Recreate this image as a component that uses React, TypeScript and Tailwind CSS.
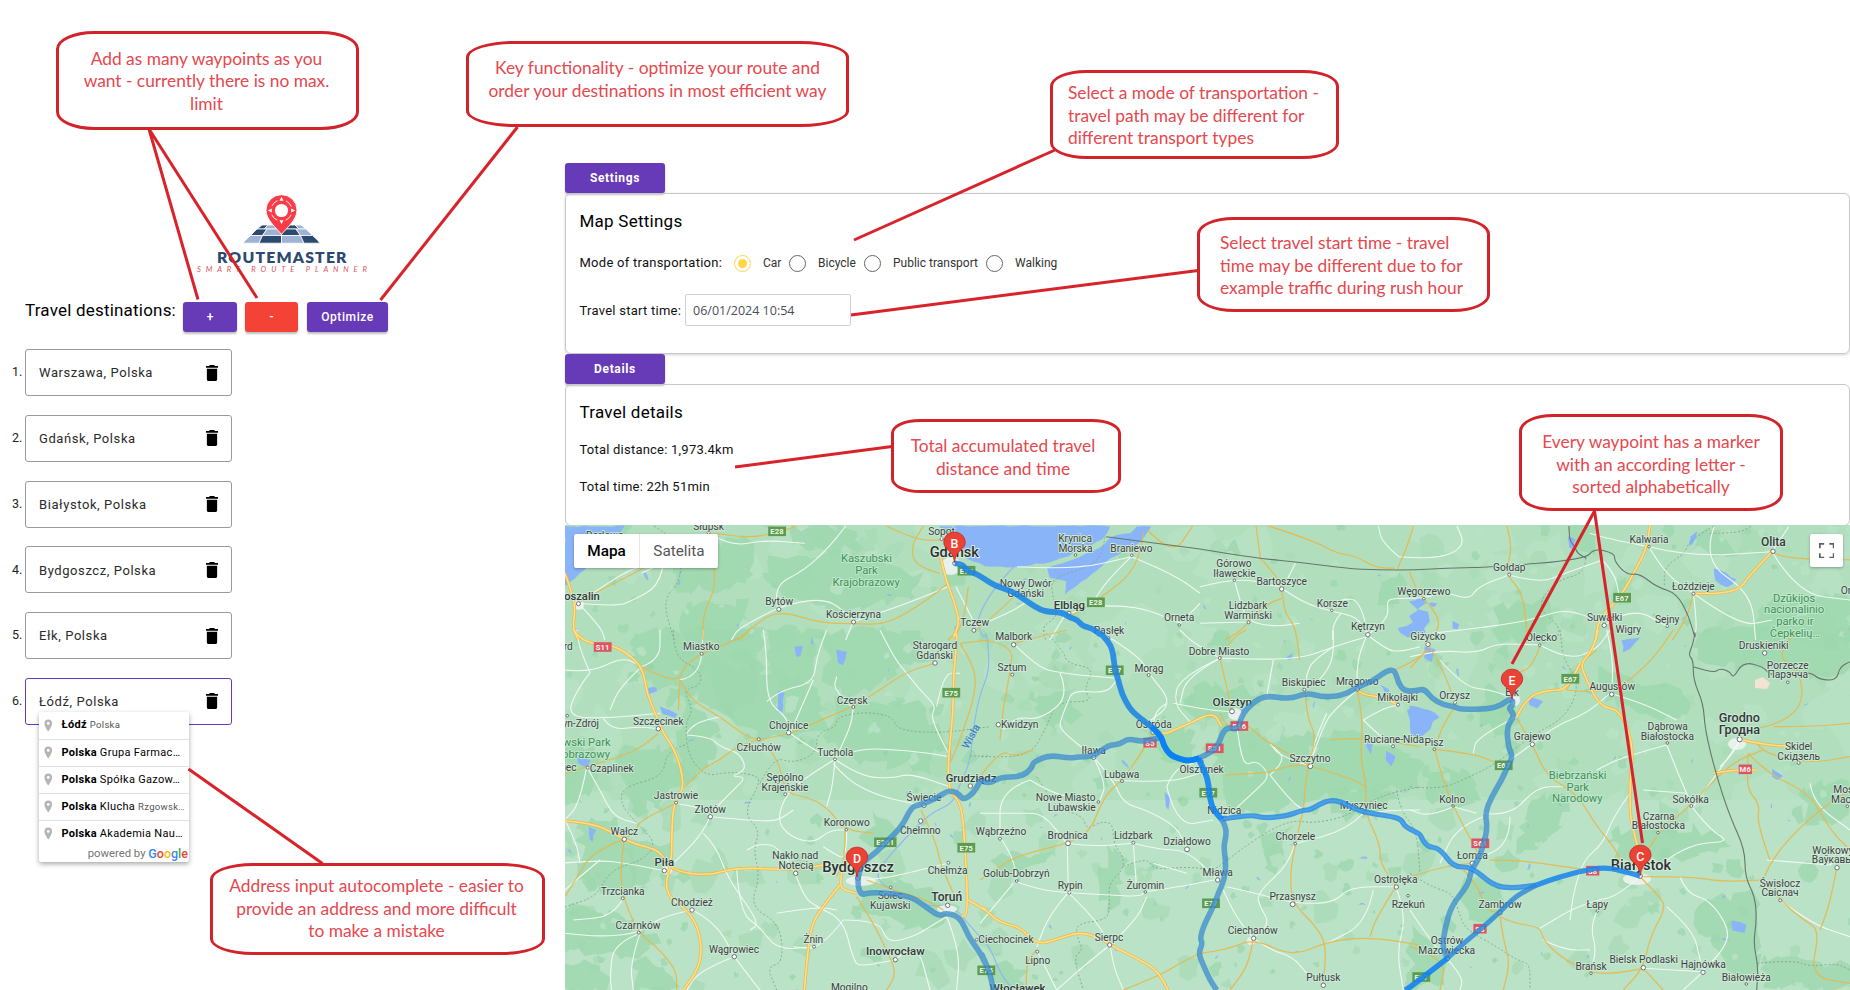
import type { ReactNode } from "react";

/* ------------------------------------------------------------------ */
/* Map geometry: every sheet has its own origin and scale              */
/* ------------------------------------------------------------------ */

type Sheet = "A" | "B" | "C" | "D" | "E";
type Pt = [number, number];

const SHEETS: Record<Sheet, { ox: number; oy: number; sx: number; sy: number }> = {
  A: { ox: 560, oy: 340, sx: 2.45, sy: 3 },
  B: { ox: 1200, oy: 340, sx: 2.412, sy: 3 },
  C: { ox: 560, oy: 630, sx: 3, sy: 3 },
  D: { ox: 980, oy: 630, sx: 3, sy: 3 },
  E: { ox: 1410, oy: 630, sx: 3, sy: 3 },
};

function project(s: Sheet, x: number, y: number): Pt {
  const t = SHEETS[s];
  return [t.ox + x / t.sx, t.oy + y / t.sy];
}

/* "A 1,2 3,4 | C 5,6" -> list of projected points */
function points(spec: string): Pt[] {
  return spec.split("|").flatMap((part) => {
    const [sheet, ...rest] = part.trim().split(/\s+/);
    return rest.map((p) => {
      const [x, y] = p.split(",").map(Number);
      return project(sheet as Sheet, x, y);
    });
  });
}

function n(v: number) {
  return v.toFixed(1);
}

function smooth(pts: Pt[]) {
  let d = `M${n(pts[0][0])} ${n(pts[0][1])}`;
  for (let i = 1; i < pts.length - 1; i++) {
    const mx = (pts[i][0] + pts[i + 1][0]) / 2;
    const my = (pts[i][1] + pts[i + 1][1]) / 2;
    d += `Q${n(pts[i][0])} ${n(pts[i][1])} ${n(mx)} ${n(my)}`;
  }
  const last = pts[pts.length - 1];
  return d + `L${n(last[0])} ${n(last[1])}`;
}

function closed(pts: Pt[]) {
  return "M" + pts.map((p) => `${n(p[0])} ${n(p[1])}`).join("L") + "Z";
}

function rng(seed: number) {
  let s = seed;
  return () => {
    s = (s * 1664525 + 1013904223) % 4294967296;
    return s / 4294967296;
  };
}

/* Roughens the edge of a polygon so that it reads as woodland */
function rough(pts: Pt[], amp: number, seed: number) {
  const r = rng(seed);
  const out: Pt[] = [];
  pts.forEach((p, i) => {
    const q = pts[(i + 1) % pts.length];
    const len = Math.hypot(q[0] - p[0], q[1] - p[1]);
    const k = Math.max(1, Math.round(len / 7));
    for (let j = 0; j < k; j++) {
      const t = j / k;
      out.push([
        p[0] + (q[0] - p[0]) * t + (r() - 0.5) * amp * 2,
        p[1] + (q[1] - p[1]) * t + (r() - 0.5) * amp * 2,
      ]);
    }
  });
  return out;
}

function scatter(count: number, min: number, max: number, seed: number, flat = 1) {
  const r = rng(seed);
  let d = "";
  for (let i = 0; i < count; i++) {
    const cx = 560 + r() * 1300;
    const cy = 520 + r() * 475;
    const size = min + r() * r() * (max - min);
    const k = 9;
    const tilt = r() * Math.PI;
    const pts: Pt[] = [];
    for (let j = 0; j < k; j++) {
      const a = (j / k) * Math.PI * 2;
      const m = size * (0.45 + r() * 0.75);
      const x = Math.cos(a) * m;
      const y = Math.sin(a) * m * flat;
      pts.push([cx + x * Math.cos(tilt) - y * Math.sin(tilt), cy + x * Math.sin(tilt) + y * Math.cos(tilt)]);
    }
    d += closed(pts);
  }
  return d;
}

const FORESTS = [
  "C 230,0 600,0 610,180 520,260 400,200 260,150 210,80",
  "C 440,100 620,120 760,160 800,300 690,330 560,300 470,230",
  "C 620,0 780,0 760,150 680,190 620,130",
  "C 800,0 1080,0 1110,90 1000,130 880,200 800,150",
  "C 830,210 1080,220 1150,330 1100,420 930,400 800,330",
  "C 380,200 480,270 450,400 380,460 340,330",
  "C 180,360 330,350 400,450 260,560 190,500",
  "C 60,590 160,560 250,700 200,790 60,760",
  "C 200,620 330,640 320,740 220,760",
  "C 880,740 1100,770 1200,850 1060,900 900,830",
  "C 0,830 180,860 300,930 220,980 0,960",
  "C 0,990 130,1000 150,1080 0,1080",
  "C 940,560 1040,600 960,660 910,640",
  "C 0,340 110,350 120,470 0,560",
  "C 220,990 330,1010 350,1080 240,1080",
  "D 720,280 900,320 1100,300 1320,380 1320,470 1150,480 980,520 760,560 700,430",
  "D 480,300 640,300 650,380 560,400",
  "D 640,160 860,190 720,280 620,250",
  "D 840,620 930,600 900,740 850,710",
  "D 380,640 440,700 400,860 360,800",
  "D 30,680 220,660 160,720 60,740",
  "D 1040,480 1240,500 1180,560 1080,560",
  "D 150,180 280,180 300,260 200,300",
  "D 40,990 130,1010 120,1080 40,1080",
  "E 160,750 230,740 290,840 200,880 150,820",
  "E 600,600 860,590 960,640 840,690 740,680 620,700",
  "E 860,810 1040,790 1040,1050 940,1000 870,900",
  "E 1060,980 1320,1000 1320,1080 1060,1080",
  "E 380,500 480,490 470,560 400,640 320,680 350,560",
  "E 560,120 830,180 830,270 700,260 600,220",
  "E 850,0 1320,0 1320,110 1200,150 1050,110 870,110",
  "E 1160,480 1320,440 1320,560 1210,590",
  "E 0,900 130,960 100,1060 0,1080",
  "E 230,160 330,240 260,330 200,260",
  "E 30,400 200,440 200,520 60,520",
  "A 300,600 460,600 480,700 400,760 280,740",
  "A 500,660 720,640 880,700 860,780 640,810 520,750",
  "A 300,780 460,790 480,900 300,900",
  "A 560,560 720,560 740,620 600,640",
  "B 1190,600 1240,560 1290,640 1240,670",
  "B 1340,790 1568,760 1568,900 1340,900",
  "B 890,560 960,560 950,650 910,640",
  "B 700,800 830,780 850,900 720,900",
  "B 420,720 480,700 500,760 440,790",
];

const WATER = [
  "A 12,558 160,558 120,625 60,690 12,740",
  "A 930,558 1348,558 1330,598 1260,640 1200,665 1130,680 1040,680 1000,655 955,600",
  "A 1450,558 1420,610 1350,655 1290,715 1235,765 1240,725 1200,712 1195,685 1262,658 1335,615 1350,588 1400,578 1412,558",
  "B 505,782 530,775 545,790 525,805 550,815 555,845 540,865 548,885 500,890 482,880 478,862 515,850 505,830 525,812",
  "B 556,785 572,788 566,800 555,798",
  "B 610,845 626,850 620,868 608,862",
  "B 1240,688 1270,700 1295,720 1270,742 1245,722",
  "B 888,590 905,600 900,630 890,620",
  "B 1185,590 1200,575 1190,610 1180,620",
  "E 0,228 60,240 90,260 70,275 60,300 20,330 0,312",
  "D 1282,240 1320,232 1320,292 1290,282",
  "E 45,50 75,60 65,97 45,85",
  "E 355,200 400,212 380,236 360,225",
  "E 965,870 1012,884 1005,910 970,900",
  "E 636,30 690,24 660,58 640,70",
  "E 1088,415 1120,440 1105,452 1086,440",
  "C 655,185 672,190 668,250 655,245",
  "C 50,380 90,390 80,412 55,400",
  "C 265,175 290,172 292,185 268,190",
  "C 300,230 350,250 345,262 310,250",
  "C 830,60 860,65 850,105 835,95",
  "C 705,50 730,48 722,78 708,80",
  "C 88,590 106,600 100,635 90,630",
  "D 555,485 570,500 565,540 556,530",
  "D 1170,320 1182,330 1170,375 1160,350",
  "D 780,215 800,205 790,240 782,250",
  "D 1220,360 1245,380 1235,410 1215,390",
  "D 1200,160 1225,175 1235,200 1215,190",
  "D 920,85 940,68 938,85 925,92",
];

const WHITE_ROADS = [
  "C 15,120 90,128 190,80 245,110",
  "C 90,128 50,180 20,260 140,265 300,250",
  "C 90,128 60,60 50,0",
  "C 245,110 300,90 300,0",
  "C 130,265 150,300 240,290 295,296",
  "C 245,110 180,170 150,240",
  "C 360,150 420,140 430,0",
  "C 380,310 400,280 480,260",
  "C 380,315 450,320 480,350 540,370 560,420 510,440 560,440 520,480 470,530 450,560",
  "C 610,0 620,60 620,215 680,260 690,310",
  "C 620,215 660,180 760,160 770,80 800,0",
  "C 690,310 760,150",
  "C 690,310 760,360 825,388 900,355 1040,360 1170,380",
  "C 825,388 870,300 880,235",
  "C 825,388 740,440 680,490 650,570 690,620 760,640 810,600 860,600",
  "C 825,388 820,460 800,530",
  "C 825,388 900,440 1000,445 1050,430 1170,470",
  "C 820,400 860,450 960,500 1080,525",
  "C 880,235 820,180 830,140",
  "C 1040,130 1080,180 1130,230 1110,260 1170,380",
  "C 1130,230 1150,130 1200,130",
  "C 960,0 1000,80 1040,130",
  "C 450,560 430,610 340,700",
  "C 450,560 560,570 650,575 700,540",
  "C 430,610 470,650 500,740 600,880 570,900",
  "C 0,700 120,690 200,700 313,722",
  "C 120,690 60,740 15,780",
  "C 190,805 160,860 40,870",
  "C 395,840 300,860 240,910 120,920 15,910",
  "C 395,840 420,850 480,900 523,980",
  "C 523,980 420,1020 380,1080",
  "C 523,980 560,1030 600,1080",
  "C 240,910 160,940 150,1040 155,1080",
  "C 240,910 210,1000 220,1080",
  "C 530,720 540,850 600,890 650,960 760,950",
  "C 650,850 770,830 830,840",
  "C 706,730 730,800 770,830 850,870 880,990 900,1010 1005,990",
  "C 850,870 780,960 700,950",
  "C 850,870 960,870 980,940 1060,920 1110,890 1160,860",
  "C 1005,990 1070,930 1110,1080",
  "C 1160,860 1200,960 1190,1080",
  "C 340,520 420,530 450,560",
  "C 80,410 60,520 15,570",
  "C 80,410 120,480 160,560 230,580",
  "C 15,570 50,640 60,700",
  "C 706,730 660,650 600,640 560,660",
  "C 860,600 860,690 820,670 790,650",
  "C 1092,530 1100,500 1170,490",
  "C 1165,700 1080,720 1000,740 920,750",
  "D 100,40 170,110 240,130 410,145",
  "D 240,130 270,200 180,270 110,260 70,300",
  "D 270,200 280,180 380,190 410,150",
  "D 270,200 240,270 240,300 340,380",
  "D 385,20 480,80 505,130 580,220 500,280",
  "D 720,85 600,140 580,220 630,275",
  "D 580,220 680,240 755,245",
  "D 720,85 880,90 980,80 1060,50 1160,20",
  "D 1060,50 1000,90 980,130 975,180",
  "D 1060,50 1060,100 1000,170",
  "D 1060,50 1060,0",
  "D 720,85 620,140 600,220",
  "D 720,85 640,40 600,0",
  "D 520,300 520,250 560,220",
  "D 340,380 400,450 430,520 500,540 590,590 620,655",
  "D 340,380 380,460 360,510",
  "D 150,450 200,480 260,500 360,515",
  "D 150,450 60,480 60,620",
  "D 0,550 120,550 190,550 260,640",
  "D 262,640 265,780",
  "D 262,640 330,650 460,640",
  "D 460,640 470,780",
  "D 460,640 540,660 620,660 713,750",
  "D 520,700 620,730",
  "D 108,755 180,780 265,788 380,795 480,800 495,785",
  "D 495,785 600,770 713,748",
  "D 265,788 210,850 170,950",
  "D 265,788 340,860 390,945",
  "D 390,945 470,870 500,800",
  "D 390,945 400,1010 430,1080",
  "D 390,945 320,1000 230,1080",
  "D 60,620 100,680 110,755",
  "D 740,770 830,790 938,820 1060,820 1110,770 1248,770",
  "D 730,780 760,850 820,925",
  "D 945,640 930,700 830,790 840,830 870,880 820,925",
  "D 740,560 840,470 870,435 830,390 790,410 770,290",
  "D 870,435 930,510 970,540",
  "D 870,435 920,390 880,350",
  "D 560,470 580,420 640,400",
  "D 560,470 590,590 700,570",
  "D 400,450 560,460 660,430",
  "D 1040,250 1000,340 990,405",
  "D 1132,180 1060,240 1030,290 990,400",
  "D 1150,270 1180,300 1240,350",
  "D 1150,270 1200,240 1254,224",
  "D 1162,14 1140,60 1130,130 1132,180",
  "D 1162,14 1220,60 1260,65 1320,50",
  "D 990,408 900,380 870,340",
  "D 1150,550 1100,600 950,640",
  "D 1150,550 1240,540 1320,540",
  "D 1248,770 1280,860 1250,960 1270,1080",
  "D 1180,780 1160,880 1040,940",
  "D 820,925 870,960 938,980 980,1030",
  "D 170,960 200,1020 230,1080",
  "D 0,880 50,820 100,760",
  "D 880,90 860,200",
  "E 0,80 90,60 200,70 260,40 390,45",
  "E 90,90 160,170 240,180 300,200",
  "E 320,260 200,320 190,370",
  "E 300,390 370,340",
  "E 370,340 430,290 530,250 600,190",
  "E 600,190 700,220 800,270",
  "E 390,45 470,90 560,60 600,0",
  "E 590,0 610,80 605,190",
  "E 770,345 640,380 560,420",
  "E 770,345 800,420 830,490 845,525",
  "E 700,480 830,490",
  "E 660,490 610,560 580,640 520,690 490,790 480,870",
  "E 845,530 900,600 960,635 860,640 780,680 740,720",
  "E 220,550 300,560 380,470 460,470",
  "E 300,560 300,640 200,690",
  "E 130,530 60,560 0,540",
  "E 130,530 200,550",
  "E 220,560 140,590 90,700",
  "E 690,740 620,800 560,810 480,840 390,895",
  "E 560,845 540,890 560,960 540,1030",
  "E 400,930 460,960 540,960",
  "E 810,740 830,790 900,810 960,900 940,960 880,1020",
  "E 770,830 850,900 870,990 880,1020",
  "E 700,1015 880,1025",
  "E 990,330 950,390 850,530",
  "E 990,330 970,370 930,410",
  "E 1070,690 1260,705",
  "E 1260,705 1320,660",
  "E 1110,810 1200,880 1320,920",
  "E 0,840 60,930 110,985",
  "E 110,985 160,1040 150,1080",
  "E 880,1025 820,1080",
  "E 1200,460 1210,520 1320,600",
  "A 45,790 150,700 200,680 230,640",
  "A 45,790 140,800 180,780 240,740 260,640",
  "A 362,580 300,640 200,700",
  "A 362,580 420,620 500,600 600,610",
  "A 534,805 520,740 600,690 660,620 700,558",
  "A 534,805 640,760 720,840",
  "A 718,845 830,800 950,740",
  "A 718,845 700,900",
  "A 534,805 440,860 420,900",
  "A 45,790 100,860 110,900",
  "A 970,740 1020,860",
  "A 1020,860 1100,820 1150,780",
  "A 1240,820 1200,900",
  "A 1400,650 1340,720 1300,800 1250,820",
  "A 1400,650 1500,700 1568,760",
  "A 1300,800 1400,790 1520,850",
  "A 1520,850 1568,790",
  "A 1120,680 1260,690 1400,650",
  "B 0,740 60,722 130,720 197,745 210,720 230,670",
  "B 197,745 250,790 320,815 380,830 405,885",
  "B 83,720 100,800 118,845 180,860 240,850",
  "B 340,820 320,850 320,900",
  "B 405,885 440,850 455,820 450,780 475,775 540,775 590,755 650,780 670,740 745,705",
  "B 405,885 390,780 340,775 318,811",
  "B 745,705 820,730 880,700 970,660",
  "B 970,660 1000,700 1010,760",
  "B 480,650 570,660 640,620 620,558",
  "B 480,650 440,610 430,558",
  "B 0,850 118,846",
  "B 975,855 1040,800 1130,860",
  "B 975,855 900,800 800,840 700,860 560,880",
  "B 1083,620 1180,650 1380,635",
  "B 1083,620 1000,600 940,580",
  "B 1083,620 1120,700 1190,760",
  "B 1190,760 1200,860 1190,900",
  "B 1240,560 1210,660 1330,760 1340,900",
  "B 1380,635 1420,560",
  "B 1380,635 1440,760 1568,780",
  "B 1190,760 1300,860 1380,840",
];

const YELLOW_ROADS = [
  "C 245,110 300,140 360,150 370,110 425,70 530,30 570,0",
  "C 360,150 390,210 480,260 560,320 596,328",
  "C 596,328 690,315 780,270 880,230 960,180 1040,125 1124,100",
  "C 360,150 355,240",
  "C 295,310 250,350 180,380 80,410 15,430",
  "C 375,470 420,420 480,390 530,350 596,328",
  "C 596,328 650,370 676,490 740,500 800,530 855,600 940,610",
  "C 348,520 240,570 230,600 193,628",
  "C 193,628 100,660 40,760 15,800",
  "C 193,628 180,720 190,805 235,908 290,950 350,1020 350,1080",
  "C 855,600 855,690 830,740",
  "C 890,800 940,880 980,960 1010,1030 980,1080",
  "C 1083,540 1130,640 1140,700 1180,790",
  "C 920,750 1000,780 1100,810 1150,840",
  "C 1200,40 1240,100 1250,180 1200,330 1170,400",
  "C 1200,40 1290,30",
  "D 0,30 100,40 90,130 70,230 60,330",
  "D 100,40 260,0",
  "D 720,85 740,170 755,240",
  "D 720,85 760,20 800,0",
  "D 470,390 500,340 520,310",
  "D 340,580 370,500 425,453 490,360",
  "D 0,750 80,690 180,660 262,640 320,610 345,570",
  "D 720,250 740,300 800,280 850,330 990,408",
  "D 735,435 800,430 860,430 930,405 990,408",
  "D 975,180 980,260 1010,320 980,420 970,540",
  "D 970,540 945,640 930,740 938,820 1000,880 1040,940 1030,1060",
  "D 990,408 1100,440 1160,470",
  "D 1132,180 1150,270 1140,380 1160,470 1155,550 1200,640 1200,700 1248,770",
  "D 1050,330 1140,320 1320,350",
  "D 660,970 740,960 820,925 938,980 1040,935 1170,920 1320,945",
  "D 820,925 810,1000 750,1080",
  "D 660,970 600,1000 540,1035 430,1080",
  "D 1248,770 1190,860 1170,920",
  "D 1245,120 1300,95 1345,60",
  "D 140,1080 135,1000 170,960",
  "D 0,440 60,360 100,380 160,360",
  "E 0,115 50,60",
  "E 390,45 370,110 320,130",
  "E 320,265 367,342 410,440 500,490 560,590 620,660 640,720",
  "E 135,230 100,280 74,358",
  "E 54,43 100,120 135,218",
  "E 74,358 90,420 128,528 210,680",
  "E 74,358 190,370 260,400 290,400",
  "E 240,690 330,690 460,710 540,720",
  "E 0,740 100,710 180,700",
  "E 160,720 200,760 230,840 270,850",
  "E 270,860 310,880 390,890 400,930 450,980 540,1030 620,1030 700,1015",
  "E 270,860 280,930 300,1000 280,1080",
  "E 690,740 740,790 770,830 720,920 700,1015 640,1080",
  "E 700,1015 760,1080",
  "E 700,740 850,740 930,755 1060,750",
  "E 744,610 845,525 960,400 1060,360",
  "E 740,620 700,680",
  "E 1060,750 1080,690 1200,560 1320,480",
  "E 1080,690 1040,580 1050,520 1010,480 1015,370",
  "E 1015,370 1070,430 1200,490 1260,600 1320,660",
  "E 1060,750 1110,810 1180,870 1230,900 1200,1040 1320,1060",
  "E 1280,715 1260,820 1230,900",
  "E 470,180 510,100 560,60",
  "E 470,180 600,195 720,100 790,0",
  "E 1010,300 1090,290 1180,230 1170,120 1100,80 1160,0",
  "E 1090,290 1200,290 1320,280",
  "E 1040,340 1060,370 1200,400 1320,380",
  "E 0,950 110,985 90,1080",
  "A 45,790 80,760 200,690 290,620 362,575 460,595 540,575 580,558",
  "A 362,580 390,720 350,820 350,900",
  "A 440,900 470,860 534,810 640,850 718,850 800,855 900,780 950,730",
  "A 930,700 870,680 860,620 890,558",
  "A 800,558 870,600 930,600",
  "A 1430,575 1420,680 1330,770 1250,830",
  "A 1440,570 1500,650 1550,558",
  "A 1000,740 990,860 950,900",
  "A 1020,870 1100,790 1130,740",
  "B 135,558 140,600 145,655",
  "B 145,655 180,700 197,745 205,820 225,850 235,900 240,960",
  "B 165,558 270,600 330,640 380,650 420,682 470,685",
  "B 515,558 500,620 475,690",
  "B 505,695 525,760 540,775 575,830 575,870 550,900",
  "B 197,775 160,790 118,845 100,870 60,900",
  "B 740,558 755,620 735,700 780,760 790,900",
  "B 1380,635 1400,655 1568,660",
  "B 1190,760 1180,820 1140,900",
];

const HIGHWAYS = [
  "C 40,0 70,40 160,45 215,80 250,120 260,190 290,260 310,310 350,370 375,470 340,520 335,620 335,690 310,790 395,850 425,930 420,1010 370,1080",
  "C 15,572 100,580 160,610 193,628",
  "C 193,628 230,645 300,660 330,720 440,738 530,712 700,720 820,700",
  "C 840,765 770,850 750,910 740,1000 733,1080",
  "C 890,790 850,780 840,765 850,690 930,680",
  "A 930,640 945,720 965,780 980,850 960,900 | C 1195,0 1180,130 1180,250 1165,380 1165,480 1205,520 1215,650 1225,850 1205,860",
  "C 1225,810 1290,850 | D 0,825 60,880 120,890 170,945 240,925 300,905 360,925 420,960 480,990 530,1020 565,1080",
  "A 12,700 40,790 30,860 45,900",
  "D 560,310 630,280 700,245 725,290",
  "D 520,310 560,310",
  "D 1132,180 1150,195 1200,200 1254,224",
  "B 1085,558 1080,620 1050,690 1020,760 960,840 955,900",
  "E 565,0 550,60 510,100 530,150 570,230 630,240 670,340 660,460 660,560 680,640 695,690",
  "E 320,260 350,200 420,180 470,180 510,100",
  "E 1000,330 1060,345 1170,350",
  "E 910,430 970,420 1040,420",
  "B 1195,760 1290,765 1330,700 1380,635",
];

const COUNTY_LINES = [
  "C 340,0 340,80 420,120 425,165 370,180 400,240 375,280 385,380 440,440 500,425 590,435 600,460 550,550 600,600 580,660 600,740 570,830 660,880 670,1000 620,1010 650,1080",
  "C 375,345 320,360 310,440 190,470 180,520 230,580 290,640 250,690 150,720 110,800 15,830",
  "C 600,460 640,380 700,400 770,370 770,310 830,290 830,260 920,245 1000,260 1010,300 1140,310 1290,290",
  "C 1230,378 1290,378",
  "A 230,558 290,600 300,720 250,780 280,900",
  "A 1335,590 1330,640 1300,680 1200,715 1210,780 1220,830 1180,860 1190,900",
  "D 190,0 250,60 260,100 345,115 310,180 340,215 230,215 200,290 150,380 0,380",
  "D 170,440 220,520 250,540 310,560 320,600 360,575 400,580 400,640 430,680 430,720 385,760 390,830 380,870 290,880 290,920 310,960 280,980 310,1080",
  "D 430,710 500,680 520,720 620,710 700,720 730,700 780,660 870,600 940,570 1000,580 1100,560 1190,500 1320,470",
  "D 1250,480 1260,540 1310,600 1320,730",
  "E 0,470 90,480 180,440 260,400 360,320 470,260 510,160 460,90 450,0",
  "E 0,730 60,770 130,790 150,860 170,900 260,950 320,990 360,1000 360,1080",
  "E 1040,1000 1150,990 1200,1010 1280,1000 1320,1020",
  "B 930,655 930,700 860,720 810,800 870,860 860,900",
  "B 1240,558 1180,600 1170,640 1120,680 1120,740",
  "B 1230,580 1300,580 1330,558",
];

const BORDERS = [
  "A 1338,590 1568,627 | B 0,627 140,655 250,668 350,685 430,690 520,690 620,683 700,682 930,658 950,625 1000,640 1000,665 1030,705 1060,700 1100,740 1150,760 1180,830 1195,900 | E 855,0 850,40 835,75 850,90 850,150 880,220 885,300 920,440 960,560 1005,660 1005,740 1035,800 1040,870 1030,940 1045,1010 1040,1080",
  "B 890,558 890,600 905,620 910,640 932,655",
  "E 850,110 910,130 930,115 960,125 970,145 1000,95 1060,110 1080,135 1110,130 1200,125 1230,150 1280,150 1290,110 1320,95",
];

/* ------------------------------------------------------------------ */
/* Map labels                                                          */
/* ------------------------------------------------------------------ */

type Label = [Sheet, number, number, string, number?];

const TOWNS: Label[] = [
  ["A", 364, 559, "Słupsk"],
  ["A", 110, 585, "Darłowo"],
  ["A", 935, 575, "Sopot"],
  ["A", 1262, 595, "Krynica"],
  ["A", 1263, 625, "Morska"],
  ["A", 1400, 625, "Braniewo"],
  ["A", 537, 785, "Bytów"],
  ["A", 719, 823, "Kościerzyna"],
  ["A", 1016, 848, "Tczew"],
  ["A", 1141, 730, "Nowy Dwór"],
  ["A", 1141, 760, "Gdański"],
  ["A", 1517, 833, "Orneta"],
  ["A", 1345, 872, "Pasłęk"],
  ["B", 82, 670, "Górowo"],
  ["B", 83, 700, "Iławeckie"],
  ["B", 197, 723, "Bartoszyce"],
  ["B", 116, 795, "Lidzbark"],
  ["B", 116, 825, "Warmiński"],
  ["B", 319, 790, "Korsze"],
  ["B", 405, 860, "Kętrzyn"],
  ["B", 540, 755, "Węgorzewo"],
  ["B", 550, 890, "Giżycko"],
  ["B", 746, 683, "Gołdap"],
  ["B", 1083, 597, "Kalwaria"],
  ["B", 1190, 740, "Łoździeje"],
  ["B", 976, 832, "Suwałki"],
  ["B", 1033, 868, "Wigry"],
  ["B", 1127, 838, "Sejny"],
  ["B", 824, 893, "Olecko"],
  ["B", 1577, 752, "Orany"],
  ["C", 424, 50, "Miastko"],
  ["C", 1125, 45, "Starogard"],
  ["C", 1124, 75, "Gdański"],
  ["C", 877, 210, "Czersk"],
  ["C", 295, 273, "Szczecinek"],
  ["C", 686, 285, "Chojnice"],
  ["C", 596, 352, "Człuchów"],
  ["C", 826, 367, "Tuchola"],
  ["C", 155, 414, "Czaplinek"],
  ["C", 675, 442, "Sępólno"],
  ["C", 675, 471, "Krajeńskie"],
  ["C", 348, 497, "Jastrowie"],
  ["C", 451, 537, "Złotów"],
  ["C", 193, 604, "Wałcz"],
  ["C", 1092, 502, "Świecie"],
  ["C", 860, 577, "Koronowo"],
  ["C", 1081, 600, "Chełmno"],
  ["C", 706, 677, "Nakło nad"],
  ["C", 708, 706, "Notecią"],
  ["C", 1163, 721, "Chełmża"],
  ["C", 188, 784, "Trzcianka"],
  ["C", 396, 816, "Chodzież"],
  ["C", 991, 797, "Solec"],
  ["C", 991, 826, "Kujawski"],
  ["C", 234, 887, "Czarnków"],
  ["C", 522, 957, "Wągrowiec"],
  ["C", 760, 929, "Żnin"],
  ["C", 868, 1072, "Mogilno"],
  ["C", 62, 280, "yn-Zdrój"],
  ["C", 30, 411, "iec"],
  ["C", 25, 48, "rd"],
  ["D", 101, 20, "Malbork"],
  ["D", 96, 113, "Sztum"],
  ["D", 507, 115, "Morąg"],
  ["D", 717, 63, "Dobre Miasto"],
  ["D", 119, 284, "Kwidzyn"],
  ["D", 521, 283, "Ostróda"],
  ["D", 341, 360, "Iława"],
  ["D", 425, 433, "Lubawa"],
  ["D", 257, 502, "Nowe Miasto"],
  ["D", 275, 532, "Lubawskie"],
  ["D", 665, 417, "Olsztynek"],
  ["D", 733, 542, "Nidzica"],
  ["D", 63, 605, "Wąbrzeźno"],
  ["D", 263, 617, "Brodnica"],
  ["D", 460, 617, "Lidzbark"],
  ["D", 621, 634, "Działdowo"],
  ["D", 109, 731, "Golub-Dobrzyń"],
  ["D", 271, 767, "Rypin"],
  ["D", 496, 765, "Żuromin"],
  ["D", 713, 727, "Mława"],
  ["D", 78, 929, "Ciechocinek"],
  ["D", 173, 990, "Lipno"],
  ["D", 387, 921, "Sierpc"],
  ["D", 818, 901, "Ciechanów"],
  ["D", 938, 799, "Przasnysz"],
  ["D", 946, 620, "Chorzele"],
  ["D", 990, 385, "Szczytno"],
  ["D", 1151, 527, "Myszyniec"],
  ["D", 971, 158, "Biskupiec"],
  ["D", 1132, 153, "Mrągowo"],
  ["D", 1253, 203, "Mikołajki"],
  ["D", 1242, 327, "Ruciane-Nida"],
  ["D", 1247, 747, "Ostrołęka"],
  ["D", 1285, 822, "Rzekuń"],
  ["D", 1030, 1041, "Pułtusk"],
  ["E", 134, 197, "Orzysz"],
  ["E", 306, 188, "Ełk"],
  ["E", 367, 320, "Grajewo"],
  ["E", 72, 337, "Pisz"],
  ["E", 607, 170, "Augustów"],
  ["E", 127, 507, "Kolno"],
  ["E", 187, 677, "Łomża"],
  ["E", 270, 824, "Zambrów"],
  ["E", 111, 932, "Ostrów"],
  ["E", 110, 962, "Mazowiecka"],
  ["E", 773, 288, "Dąbrowa"],
  ["E", 772, 318, "Białostocka"],
  ["E", 842, 507, "Sokółka"],
  ["E", 746, 558, "Czarna"],
  ["E", 745, 587, "Białostocka"],
  ["E", 562, 822, "Łapy"],
  ["E", 543, 1008, "Brańsk"],
  ["E", 701, 989, "Bielsk Podlaski"],
  ["E", 880, 1003, "Hajnówka"],
  ["E", 1009, 1041, "Białowieża"],
  ["E", 1110, 760, "Świsłocz"],
  ["E", 1110, 788, "Свіслач"],
  ["E", 1284, 660, "Wołkowysk"],
  ["E", 1284, 689, "Ваўкавыск"],
  ["E", 1166, 348, "Skidel"],
  ["E", 1166, 378, "Скідзель"],
  ["E", 1312, 477, "Mosty"],
  ["E", 1312, 507, "Масты"],
  ["E", 1133, 105, "Porzecze"],
  ["E", 1133, 134, "Парэчча"],
  ["E", 1061, 45, "Druskieniki"],
];

const CITIES: Label[] = [
  ["A", 54, 768, "oszalin", 11.2],
  ["A", 1248, 796, "Elbląg", 11.4],
  ["B", 1383, 607, "Olita", 12],
  ["C", 313, 697, "Piła", 11.4],
  ["C", 1233, 445, "Grudziądz", 11.2],
  ["C", 1160, 801, "Toruń", 12],
  ["C", 1006, 963, "Inowrocław", 11.4],
  ["D", 113, 1075, "Włocławek", 11.4],
  ["D", 757, 217, "Olsztyn", 11.8],
  ["E", 988, 263, "Grodno", 12.6],
  ["E", 988, 300, "Гродна", 12.6],
];

const CAPITALS: Label[] = [
  ["A", 966, 635, "Gdańsk", 14.6],
  ["C", 894, 712, "Bydgoszcz", 14.8],
  ["E", 693, 704, "Białystok", 14.6],
];

const PARKS: Label[] = [
  ["A", 751, 655, "Kaszubski"],
  ["A", 751, 690, "Park"],
  ["A", 750, 725, "Krajobrazowy"],
  ["B", 1433, 773, "Dzūkijos"],
  ["B", 1433, 808, "nacionalinio"],
  ["B", 1435, 844, "parko ir"],
  ["B", 1435, 879, "Čepkelių…"],
  ["C", 80, 335, "wski Park"],
  ["C", 78, 371, "obrazowy"],
  ["E", 503, 435, "Biebrzański"],
  ["E", 503, 470, "Park"],
  ["E", 502, 505, "Narodowy"],
];

/* sheet, x, y, radius */
const DOTS: [Sheet, number, number, number][] = [
  ["A", 364, 578, 1.6], ["A", 45, 791, 2], ["A", 536, 808, 2], ["A", 719, 846, 2], ["A", 1014, 871, 2],
  ["A", 935, 597, 1.6], ["A", 1263, 645, 1.3], ["A", 1401, 646, 1.3], ["A", 1247, 820, 2], ["A", 1517, 855, 1.3],
  ["A", 967, 670, 2], ["B", 83, 721, 1.3], ["B", 197, 747, 2.2], ["B", 117, 847, 1.5], ["B", 318, 811, 1.3],
  ["B", 405, 884, 2.2], ["B", 540, 776, 1.3], ["B", 746, 704, 1.5], ["B", 1083, 620, 1.3], ["B", 1382, 634, 2.2],
  ["B", 1190, 761, 1.5], ["B", 975, 856, 2.2], ["B", 1127, 859, 1.3],
  ["C", 425, 71, 1.5], ["C", 1125, 99, 2.2], ["C", 880, 231, 1.5], ["C", 295, 296, 2.2], ["C", 686, 308, 2.2],
  ["C", 596, 328, 1.5], ["C", 825, 388, 1.5], ["C", 83, 413, 1.5], ["C", 676, 493, 1.5], ["C", 348, 518, 1.5],
  ["C", 451, 560, 2.2], ["C", 193, 628, 2.2], ["C", 1092, 526, 2.2], ["C", 859, 599, 1.3], ["C", 1082, 573, 2.2],
  ["C", 707, 730, 2.2], ["C", 1165, 698, 1.5], ["C", 313, 722, 2.2], ["C", 188, 805, 1.5], ["C", 396, 840, 2.2],
  ["C", 992, 772, 1.3], ["C", 236, 908, 1.5], ["C", 523, 980, 2.2], ["C", 762, 950, 1.5], ["C", 1163, 826, 2.2],
  ["C", 1006, 989, 2.2], ["C", 1231, 468, 2.2], ["C", 22, 257, 1.3], ["C", 894, 744, 2.4], ["C", 1250, 929, 1.3],
  ["D", 101, 44, 2.2], ["D", 97, 134, 1.5], ["D", 506, 135, 1.5], ["D", 719, 84, 1.5], ["D", 55, 284, 2.2],
  ["D", 519, 306, 2.2], ["D", 341, 382, 2.2], ["D", 426, 453, 1.5], ["D", 355, 516, 1.3], ["D", 666, 394, 1.3],
  ["D", 733, 563, 1.5], ["D", 60, 626, 1.5], ["D", 264, 640, 2.4], ["D", 460, 638, 1.5], ["D", 621, 658, 2.4],
  ["D", 110, 753, 1.3], ["D", 268, 788, 1.5], ["D", 496, 786, 1.3], ["D", 713, 750, 2.2], ["D", 172, 965, 1.5],
  ["D", 389, 945, 2.2], ["D", 821, 925, 2.2], ["D", 938, 823, 2.4], ["D", 946, 641, 1.3], ["D", 991, 409, 2.4],
  ["D", 1153, 549, 1.3], ["D", 973, 179, 1.5], ["D", 1132, 177, 2.2], ["D", 1254, 224, 1.5], ["D", 1239, 349, 1.5],
  ["D", 1249, 771, 2.2], ["D", 1284, 797, 1.3], ["D", 1030, 1066, 2.2], ["D", 756, 244, 2.4], ["D", 386, 24, 1.3],
  ["E", 54, 43, 2.2], ["E", 389, 46, 1.3], ["E", 135, 218, 1.5], ["E", 367, 343, 2.2],
  ["E", 73, 358, 1.3], ["E", 605, 193, 2.2], ["E", 129, 528, 1.3], ["E", 187, 700, 2.2], ["E", 270, 848, 2.2],
  ["E", 112, 986, 2.2], ["E", 772, 339, 1.3], ["E", 844, 528, 1.5], ["E", 744, 608, 1.3], ["E", 562, 843, 1.3],
  ["E", 543, 1030, 1.3], ["E", 700, 1013, 2.2], ["E", 879, 1027, 2.2], ["E", 1009, 1062, 1.3], ["E", 1111, 811, 1.5],
  ["E", 1281, 713, 2.2], ["E", 1166, 399, 1.5], ["E", 1312, 529, 1.3], ["E", 1133, 157, 1.3], ["E", 1064, 69, 2.2],
  ["E", 989, 328, 2.6], ["E", 690, 738, 2.4],
];

const SHIELDS: [Sheet, number, number, string, "green" | "red"][] = [
  ["A", 532, 574, "E28", "green"],
  ["A", 996, 692, "E77", "green"],
  ["A", 1313, 787, "E28", "green"],
  ["B", 1018, 773, "E67", "green"],
  ["C", 128, 51, "S11", "red"],
  ["C", 1174, 188, "E75", "green"],
  ["C", 976, 637, "E261", "green"],
  ["C", 1219, 653, "E75", "green"],
  ["C", 1279, 1021, "E75", "green"],
  ["D", 404, 121, "E77", "green"],
  ["D", 510, 338, "S5", "red"],
  ["D", 704, 355, "S51", "red"],
  ["D", 778, 288, "S16", "red"],
  ["D", 685, 488, "E77", "green"],
  ["D", 693, 820, "E77", "green"],
  ["E", 481, 146, "E67", "green"],
  ["E", 281, 406, "E67", "green"],
  ["E", 211, 640, "S61", "red"],
  ["E", 548, 722, "S8", "red"],
  ["E", 210, 896, "S8", "red"],
  ["E", 34, 1041, "E67", "green"],
  ["E", 1006, 418, "M6", "red"],
];

const MAIN_ROUTE =
  "A 967,670 988,672 994,692 1020,700 1065,738 1105,752 1140,780 1165,802 1190,815 1230,817 1250,833 1268,840 1280,858 1305,866 1325,885 | D 360,8 385,35 398,60 405,120 415,150 425,190 448,235 475,260 515,290 545,320 550,345 570,375 600,387 625,393 655,385";
const SOUTH_BRIGHT = "D 655,385 665,405 685,450 692,530 725,568";
const ROUTES_SOFT = [
  "D 725,568 738,590 738,620 731,650 738,700 733,750 715,790 700,830 672,885 660,925 668,940 655,970 672,1010 690,1050 710,1080",
  "D 655,385 690,370 715,345 735,290 775,300 782,265 800,235 850,195 930,208 980,188 1030,202 1090,196 1130,172 1175,155 1220,122 1245,120 1255,160 1275,185 1320,180 | E 20,180 45,178 65,205 100,225 135,230 150,238 235,238 275,225 300,205 307,215",
  "E 307,210 310,225 295,235 315,255 290,290 295,350 308,380 295,405 275,450 245,500 225,550 232,590 222,640 205,690 183,720 175,765 125,825 105,895 97,950 112,985",
  "C 894,744 893,798 940,785 1050,798 1090,825 1138,860 1155,848 1200,860 1225,920 1262,970 1280,1010 | D 0,960 30,1030 40,1080",
  "D 545,322 490,337 445,325 420,343 385,345 340,380 295,380 270,385 210,375 160,395 155,415 125,440 60,442 30,460 0,452 | C 1260,455 1240,490 1210,510 1195,490 1165,480 1130,505 1080,525 1055,530 1025,590 985,630 945,670 905,700 894,744",
];
const ROUTES_MID = [
  "D 725,568 810,553 850,565 920,558 970,540 990,540 1020,522 1050,510 1085,515 1120,535 1160,548 1240,560 1265,570 1275,590 1320,612 | E 30,615 50,650 90,655 130,712 185,710 250,768 310,775 380,765",
];
const BIAL_ROUTE = "E 690,738 630,720 580,712 520,722 450,740 380,765";
const OSTROW_ROUTE = "E 380,765 330,790 290,825 260,855 215,895 155,945 112,985";
const WARSAW_ROUTE = "E 112,985 60,1025 0,1072 | D 1275,1080";

function RoadSet({ specs, color, width, dash, opacity }: { specs: string[]; color: string; width: number; dash?: string; opacity?: number }) {
  return (
    <g fill="none" stroke={color} strokeWidth={width} strokeDasharray={dash} opacity={opacity} strokeLinejoin="round">
      {specs.map((s) => (
        <path key={s} d={smooth(points(s))} />
      ))}
    </g>
  );
}

function Labels({ items, size, color, weight, halo }: { items: Label[]; size: number; color: string; weight: number; halo: string }) {
  return (
    <g
      fontFamily="Roboto, sans-serif"
      fontWeight={weight}
      fill={color}
      stroke={halo}
      strokeWidth="1.8"
      strokeLinejoin="round"
      paintOrder="stroke"
      textAnchor="middle"
    >
      {items.map(([s, x, y, text, own]) => {
        const [px, py] = project(s, x, y);
        const fs = own ?? size;
        return (
          <text key={`${text}${x}${y}`} x={n(px)} y={n(py + fs * 0.34)} fontSize={fs}>
            {text}
          </text>
        );
      })}
    </g>
  );
}

function Pin({ x, y, letter }: { x: number; y: number; letter: string }) {
  return (
    <g transform={`translate(${x} ${y})`}>
      <path
        d="M0 0C-1 -7.500 -3.200 -9.700 -6.200 -12.500C-8.800 -14.800 -10.700 -17 -10.700 -20.200C-10.700 -26 -6 -30.300 0 -30.300S10.700 -26 10.700 -20.200C10.700 -17 8.800 -14.800 6.200 -12.500C3.200 -9.700 1 -7.500 0 0Z"
        fill="#ea4335"
        stroke="#c5221f"
        strokeWidth="0.8"
      />
      <text y="-15" textAnchor="middle" fontFamily="Roboto, sans-serif" fontWeight="500" fontSize="12.500" fill="#fff">
        {letter}
      </text>
    </g>
  );
}

function MapCanvas() {
  return (
    <svg viewBox="565 525 1285 465" className="block h-[465px] w-[1285px]">
      <rect x="565" y="525" width="1285" height="465" fill="#b1dfbe" />
      <rect x="565" y="800" width="1285" height="190" fill="#bae2c6" />
      <path d={scatter(150, 10, 46, 17)} fill="#bbe3c7" opacity="0.6" />
      <path d={scatter(150, 5, 24, 91)} fill="#a6dab4" opacity="0.7" />
      <g fill="#9dd7ae">
        {FORESTS.map((f, i) => (
          <path key={f} d={closed(rough(points(f), 6, i * 37 + 5))} opacity="0.8" />
        ))}
      </g>
      <path d={scatter(200, 3, 13, 7)} fill="#9dd7ae" opacity="0.8" />
      <path d={scatter(170, 3, 12, 42)} fill="#b9e2c5" opacity="0.8" />
      <path d={scatter(30, 2, 7, 312)} fill="#92d1a2" opacity="0.6" />
      <path d={scatter(90, 2, 6, 777, 0.3)} fill="#8bb6f3" opacity="0.85" />
      <g fill="#8ab4f8">
        {WATER.map((f, i) => (
          <path key={f} d={closed(rough(points(f), 0.9, i + 3))} />
        ))}
      </g>
      <g fill="none" stroke="#8fb9ee" strokeWidth="1.2">
        <path d={smooth(points("A 1120,670 1080,720 1040,790 1020,850 1040,900 | D 20,0 30,120 0,190 -20,290 -30,400 -60,460 | C 1180,520 1110,550 1040,620 960,710 950,750 1010,790 1100,830 1180,825 1240,900 | D 30,950 60,1030 100,1080"))} />
      </g>
      <g fill="#eef3f1" opacity="0.9">
        <ellipse cx="951" cy="566" rx="10" ry="9" />
        <ellipse cx="861" cy="881" rx="15" ry="5" />
        <ellipse cx="1637" cy="879" rx="14" ry="6" />
        <ellipse cx="1737" cy="744" rx="9" ry="6" />
        <ellipse cx="1235" cy="714" rx="7" ry="6" />
        <ellipse cx="947" cy="909" rx="10" ry="4" />
        <ellipse cx="579" cy="605" rx="5" ry="5" />
        <ellipse cx="1515" cy="700" rx="5" ry="6" />
        <ellipse cx="667" cy="870" rx="5" ry="5" />
        <ellipse cx="1251" cy="941" rx="4" ry="4" />
      </g>
      <path d="M1755 680l8-3 7 6-3 6-12-1z" fill="#f3e3d3" />
      <RoadSet specs={COUNTY_LINES} color="#86a38f" width={0.9} dash="2 2" />
      <RoadSet specs={WHITE_ROADS} color="#f4fbf6" width={1.1} opacity={0.95} />
      <RoadSet specs={YELLOW_ROADS} color="#e8b84a" width={1.25} opacity={0.9} />
      <RoadSet specs={HIGHWAYS} color="#efb548" width={3} />
      <RoadSet specs={HIGHWAYS} color="#fde08a" width={1.6} />
      <RoadSet specs={BORDERS} color="#66766c" width={1.1} />

      <g stroke="#5f6368" strokeWidth="0.9" fill="#fff">
        {DOTS.map(([s, x, y, r]) => {
          const [px, py] = project(s, x, y);
          return <circle key={`${s}${x}${y}`} cx={n(px)} cy={n(py)} r={r} />;
        })}
      </g>
      <Labels items={PARKS} size={11.2} color="#3d9159" weight={400} halo="#c3e8cd" />
      <Labels items={TOWNS} size={10.2} color="#3a4043" weight={400} halo="#cfead6" />
      <Labels items={CITIES} size={11} color="#33383a" weight={500} halo="#cfead6" />
      <Labels items={CAPITALS} size={14} color="#2c3032" weight={500} halo="#d8efde" />
      <text transform="translate(974 738) rotate(-62)" textAnchor="middle" fontFamily="Roboto, sans-serif" fontSize="10.500" fill="#2f6fd0">
        Wisła
      </text>
      {SHIELDS.map(([s, x, y, text, tone]) => {
        const [px, py] = project(s, x, y);
        const w = text.length * 4.6 + 4;
        return (
          <g key={`${s}${x}${y}`}>
            <rect x={n(px - w / 2)} y={n(py - 4.8)} width={w} height="9.600" fill={tone === "green" ? "#5d9c4e" : "#dd5560"} />
            <text x={n(px)} y={n(py + 3)} textAnchor="middle" fontFamily="Roboto, sans-serif" fontWeight="700" fontSize="7.600" letterSpacing="0.2" fill="#eef7ee">
              {text}
            </text>
          </g>
        );
      })}

      <g fill="none" strokeLinejoin="round" strokeLinecap="butt">
        {ROUTES_SOFT.map((r) => (
          <path key={r} d={smooth(points(r))} stroke="#2a80cc" strokeOpacity="0.66" strokeWidth="5.600" />
        ))}
        {ROUTES_SOFT.map((r) => (
          <path key={r} d={smooth(points(r))} stroke="#5ba3d8" strokeOpacity="0.5" strokeWidth="2.200" />
        ))}
        {ROUTES_MID.map((r) => (
          <path key={r} d={smooth(points(r))} stroke="#2287e6" strokeOpacity="0.8" strokeWidth="5.200" />
        ))}
        {ROUTES_MID.map((r) => (
          <path key={r} d={smooth(points(r))} stroke="#55a8ee" strokeOpacity="0.6" strokeWidth="1.800" />
        ))}
        <path d={smooth(points(OSTROW_ROUTE))} stroke="#2a86d8" strokeOpacity="0.8" strokeWidth="5" />
        <path d={smooth(points(BIAL_ROUTE))} stroke="#1c86ea" strokeOpacity="0.88" strokeWidth="5.200" />
        <path d={smooth(points(WARSAW_ROUTE))} stroke="#1483ee" strokeOpacity="0.9" strokeWidth="5.400" />
        <path d={smooth(points(MAIN_ROUTE))} stroke="#1b84e6" strokeOpacity="0.88" strokeWidth="5.800" />
        <path d={smooth(points(SOUTH_BRIGHT))} stroke="#0c83f2" strokeOpacity="0.88" strokeWidth="5.800" />
        <path d={smooth(points("D 515,290 545,320 550,345 570,375 600,387 625,393 658,385"))} stroke="#0a82f5" strokeWidth="5.600" />
      </g>

      <Pin x={954.5} y={562.5} letter="B" />
      <Pin x={857} y={877.5} letter="D" />
      <Pin x={1512} y={699.5} letter="E" />
      <Pin x={1640.3} y={875.5} letter="C" />
    </svg>
  );
}

/* ------------------------------------------------------------------ */
/* Sidebar                                                             */
/* ------------------------------------------------------------------ */

function Logo() {
  return (
    <svg viewBox="190 190 184 90" className="ml-[190px] block h-[90px] w-[184px]">
      <g stroke="#fff" strokeWidth="0.8">
        <path d="M262 225H268L264 229H257Z" fill="#2c4a6e" />
        <path d="M268 225H281.500V229H264Z" fill="#9db2d5" />
        <path d="M281.500 225H295L299 229H281.500Z" fill="#2c4a6e" />
        <path d="M295 225H301L306 229H299Z" fill="#9db2d5" />
        <path d="M257 229H267L262.500 235.500H250.500Z" fill="#2c4a6e" />
        <path d="M267 229H281.500V235.500H262.500Z" fill="#9db2d5" />
        <path d="M281.500 229H296L300.500 235.500H281.500Z" fill="#2c4a6e" />
        <path d="M296 229H306L312.500 235.500H300.500Z" fill="#9db2d5" />
        <path d="M250.500 235.500H262.500L259 243.200H243.500Q243.500 241.500 250.500 235.500Z" fill="#9db2d5" />
        <path d="M262.500 235.500H281.500V243.200H259Z" fill="#2c4a6e" />
        <path d="M281.500 235.500H300.500L304 243.200H281.500Z" fill="#9db2d5" />
        <path d="M300.500 235.500H312.500Q319.500 241.500 319.500 243.200H304Z" fill="#2c4a6e" />
      </g>
      <path
        d="M281.500 234.500C277 228.500 266 220 266 210.200A15.500 15.500 0 0 1 297 210.200C297 220 286 228.500 281.500 234.500Z"
        fill="#f93c48"
        stroke="#fff"
        strokeWidth="0.9"
      />
      <circle cx="281.500" cy="210.500" r="6.600" fill="#fff" />
      <circle cx="281.500" cy="210.500" r="10.600" fill="none" stroke="#fff" strokeWidth="0.9" strokeDasharray="8 8.650" strokeDashoffset="-4.300" />
      <path d="M281.500 196.800l2 4h-4zM281.500 224.200l2-4h-4zM267.800 210.500l4-2v4zM295.200 210.500l-4-2v4z" fill="#fff" />
      <text x="217" y="262.500" fontFamily="Lato, sans-serif" fontWeight="800" fontSize="15.800" fill="#2c4a6e" textLength="129.500" lengthAdjust="spacing">
        ROUTEMASTER
      </text>
      <text x="197" y="272" fontFamily="Lato, sans-serif" fontStyle="italic" fontSize="7.600" fill="#e0525c" textLength="170" lengthAdjust="spacing">
        SMART ROUTE PLANNER
      </text>
    </svg>
  );
}

function Trash() {
  return (
    <svg viewBox="0 0 14 18" className="h-[16px] w-[12px]" preserveAspectRatio="none">
      <path d="M1 16c0 1.100.9 2 2 2h8c1.100 0 2-.9 2-2V4.300H1zM14 1h-3.500l-1-1h-5l-1 1H0v2h14z" fill="#000" />
    </svg>
  );
}

const DESTINATIONS = [
  "Warszawa, Polska",
  "Gdańsk, Polska",
  "Białystok, Polska",
  "Bydgoszcz, Polska",
  "Ełk, Polska",
  "Łódź, Polska",
];

const SUGGESTIONS = [
  { match: "Łódź", rest: "", small: "Polska" },
  { match: "Polska", rest: "Grupa Farmac…", small: "" },
  { match: "Polska", rest: "Spółka Gazow…", small: "" },
  { match: "Polska", rest: "Klucha", small: "Rzgowsk…" },
  { match: "Polska", rest: "Akademia Nau…", small: "" },
];

function Suggestions() {
  return (
    <div className="absolute top-[33px] left-[13px] h-[150px] w-[150px] rounded-[2px] bg-white text-[11px] tracking-[0.3px] text-black shadow-[0_2px_5px_rgba(0,0,0,0.35)]">
      {SUGGESTIONS.map((s, i) => (
        <div
          key={i}
          className={
            i === 0
              ? "flex h-[27px] items-center overflow-hidden whitespace-nowrap"
              : "flex h-[27px] items-center overflow-hidden border-t border-[#e0e0e0] whitespace-nowrap"
          }
        >
          <svg viewBox="0 0 10 14" className="mr-[9px] ml-[5px] h-[13px] w-[8.500px] shrink-0">
            <path d="M5 0a4.500 4.500 0 0 0-4.500 4.500C.5 8 5 14 5 14s4.500-6 4.500-9.500A4.500 4.500 0 0 0 5 0zm0 6.200a1.700 1.700 0 1 1 0-3.400 1.700 1.700 0 0 1 0 3.400z" fill="#b5b5b5" />
          </svg>
          <span className="font-bold">{s.match}</span>
          {s.rest && <span className="ml-[3px]">{s.rest}</span>}
          {s.small && <span className="ml-[3px] text-[9.500px] text-[#555]">{s.small}</span>}
        </div>
      ))}
      <div className="flex h-[14px] items-center justify-end pr-px text-[11.300px] tracking-normal text-[#757575]">
        powered by&nbsp;
        <span className="text-[12.500px] font-medium">
          <span className="text-[#4285f4]">G</span>
          <span className="text-[#ea4335]">o</span>
          <span className="text-[#fbbc05]">o</span>
          <span className="text-[#4285f4]">g</span>
          <span className="text-[#34a853]">l</span>
          <span className="text-[#ea4335]">e</span>
        </span>
      </div>
    </div>
  );
}

const RAISED = "shadow-[0_2px_2px_rgba(0,0,0,0.25)]";

function Sidebar() {
  return (
    <aside className="w-[565px] shrink-0 pt-[190px]">
      <Logo />
      <div className="mt-[22px] flex h-[30px] items-start pl-[25px]">
        <h1 className="w-[158px] text-[17px] leading-[17px] font-normal tracking-[0.2px] whitespace-nowrap text-black">Travel destinations:</h1>
        <button className={`h-[30px] w-[54px] rounded-[3px] bg-[#673ab7] text-[12px] font-medium text-white ${RAISED}`}>+</button>
        <button className={`ml-[8px] h-[30px] w-[53px] rounded-[3px] bg-[#f44336] text-[12px] font-medium text-white ${RAISED}`}>-</button>
        <button className={`ml-[9px] h-[30px] w-[81px] rounded-[3px] bg-[#673ab7] text-[12px] font-medium tracking-[0.6px] text-white ${RAISED}`}>Optimize</button>
      </div>
      <ol className="mt-[17px] flex flex-col gap-[18.800px]">
        {DESTINATIONS.map((d, i) => (
          <li key={d} className="flex h-[47px] items-center">
            <span className="w-[25px] pl-[12px] text-[12.500px] text-[#222]">{i + 1}.</span>
            <div
              className={
                i === 5
                  ? "relative flex h-[47px] w-[207px] items-center justify-between rounded-[3px] border border-[#673ab7] pr-[13px] pl-[13px]"
                  : "relative flex h-[47px] w-[207px] items-center justify-between rounded-[3px] border border-[#9a9a9a] pr-[13px] pl-[13px]"
              }
            >
              <span className="pt-px text-[13px] tracking-[0.580px] text-[#2b2b2b]">{d}</span>
              <Trash />
              {i === 5 && <Suggestions />}
            </div>
          </li>
        ))}
      </ol>
    </aside>
  );
}

/* ------------------------------------------------------------------ */
/* Main column                                                         */
/* ------------------------------------------------------------------ */

function Tab({ children }: { children: ReactNode }) {
  return (
    <button className={`block h-[30px] w-[100px] rounded-[3px] bg-[#673ab7] text-[12px] font-bold tracking-[0.650px] text-white ${RAISED}`}>{children}</button>
  );
}

function Mode({ label, width, checked }: { label: string; width: string; checked?: boolean }) {
  return (
    <label className={`flex shrink-0 items-center ${width}`}>
      <span className={checked ? "flex size-[17px] items-center justify-center rounded-full border border-[#fbd54a]" : "size-[17px] rounded-full border border-[#666]"}>
        {checked && <span className="size-[9px] rounded-full bg-[#ffd740]" />}
      </span>
      <span className="pl-[12px] text-[12px] whitespace-nowrap text-[#333]">{label}</span>
    </label>
  );
}

function Main() {
  return (
    <main className="w-[1285px] shrink-0 pt-[163px]">
      <Tab>Settings</Tab>
      <section className="h-[161px] rounded-[6px] border border-[#c8c8c8] pt-[17px] pl-[13.500px] shadow-[0_1px_3px_rgba(0,0,0,0.18)]">
        <h2 className="text-[17px] leading-[20px] font-normal tracking-[0.250px] text-black">Map Settings</h2>
        <div className="mt-[22px] flex h-[20px] items-center">
          <span className="w-[154.500px] pb-px text-[13px] tracking-[0.260px] text-[#111]">Mode of transportation:</span>
          <Mode label="Car" width="w-[55px]" checked />
          <Mode label="Bicycle" width="w-[75px]" />
          <Mode label="Public transport" width="w-[122px]" />
          <Mode label="Walking" width="w-[80px]" />
        </div>
        <div className="mt-[21px] flex h-[32px] items-center">
          <span className="w-[105.500px] pt-[2px] text-[13px] tracking-[0.260px] text-[#111]">Travel start time:</span>
          <div className="flex h-[32px] w-[166px] items-center rounded-[2px] border border-[#ced4da] pt-[2px] pl-[7px] font-['Open_Sans',sans-serif] text-[12.500px] text-[#495057]">
            06/01/2024 10:54
          </div>
        </div>
      </section>
      <Tab>Details</Tab>
      <section className="h-[142px] rounded-[6px] border border-[#c8c8c8] pt-[17px] pl-[13.500px] text-black">
        <h2 className="text-[17px] leading-[20px] font-normal tracking-[0.250px]">Travel details</h2>
        <p className="mt-[19px] text-[13px] leading-[18px] tracking-[0.220px] text-[#111]">Total distance: 1,973.4km</p>
        <p className="mt-[19px] text-[13px] leading-[18px] tracking-[0.220px] text-[#111]">Total time: 22h 51min</p>
      </section>
      <div className="relative -mt-px h-[465px] overflow-hidden">
        <MapCanvas />
        <div className="absolute top-[9px] left-[9px] flex h-[34px] rounded-[2px] bg-white text-[15.300px] shadow-[0_1px_3px_rgba(0,0,0,0.3)]">
          <button className="w-[66px] border-r border-[#e6e6e6] font-medium text-black">Mapa</button>
          <button className="w-[78px] text-[#565656]">Satelita</button>
        </div>
        <div className="absolute top-[9px] right-[7px] flex size-[33px] items-center justify-center rounded-[2px] bg-white shadow-[0_1px_3px_rgba(0,0,0,0.3)]">
          <svg viewBox="0 0 18 18" className="size-[15.500px]">
            <path d="M0 0v6h2V2h4V0zM16 0h-4v2h4v4h2V0zM16 16h-4v2h6v-6h-2zM2 12H0v6h6v-2H2z" fill="#5f5f5f" />
          </svg>
        </div>
      </div>
    </main>
  );
}

/* ------------------------------------------------------------------ */
/* Annotation layer                                                    */
/* ------------------------------------------------------------------ */

function Callout({ place, align, lines }: { place: string; align: string; lines: string[] }) {
  return (
    <div
      className={`absolute flex flex-col border-[3px] border-[#d2232a] font-['Lato','Liberation_Sans',sans-serif] text-[17.350px] leading-[22.700px] whitespace-nowrap text-[#e5484e] ${place} ${align}`}
    >
      {lines.map((l) => (
        <span key={l}>{l}</span>
      ))}
    </div>
  );
}

const POINTERS = [
  "M149 129L198 299.500",
  "M149 129L257 298",
  "M517.500 127L380.500 300",
  "M1055 150L854 240",
  "M1198 270.500L851 315",
  "M892 446.500L735 467",
  "M1594.500 511L1512 664",
  "M1594.500 511L1642.500 843",
  "M322.500 863.500L188.500 769",
];

function Annotations() {
  return (
    <div className="pointer-events-none absolute inset-0">
      <svg viewBox="0 0 1850 990" className="absolute inset-0 h-[990px] w-[1850px]" fill="none" stroke="#d8232a" strokeWidth="3">
        {POINTERS.map((d) => (
          <path key={d} d={d} />
        ))}
      </svg>
      <Callout place="top-[31px] left-[56px] h-[99px] w-[303px] rounded-[38px/18px] pt-[13.500px] pr-[2px]" align="items-center" lines={["Add as many waypoints as you", "want - currently there is no max.", "limit"]} />
      <Callout place="top-[41px] left-[466px] h-[86px] w-[383px] rounded-[48px/16px] pt-[13px]" align="items-center" lines={["Key functionality - optimize your route and", "order your destinations in most efficient way"]} />
      <Callout place="top-[70px] left-[1050px] h-[89px] w-[289px] rounded-[36px/16px] pt-[9px] pl-[15px]" align="items-start" lines={["Select a mode of transportation -", "travel path may be different for", "different transport types"]} />
      <Callout place="top-[217px] left-[1197px] h-[95px] w-[293px] rounded-[37px/17px] pt-[12px] pl-[20px]" align="items-start" lines={["Select travel start time - travel", "time may be different due to for", "example traffic during rush hour"]} />
      <Callout place="top-[419px] left-[891px] h-[74px] w-[230px] rounded-[29px/14px] pt-[13px] pr-[6px]" align="items-center" lines={["Total accumulated travel", "distance and time"]} />
      <Callout place="top-[414px] left-[1519px] h-[97px] w-[264px] rounded-[34px/17px] pt-[14px]" align="items-center" lines={["Every waypoint has a marker", "with an according letter -", "sorted alphabetically"]} />
      <Callout place="top-[863px] left-[210px] h-[92px] w-[335px] rounded-[43px/16px] pt-[9px] pr-[2px]" align="items-center" lines={["Address input autocomplete - easier to", "provide an address and more difficult", "to make a mistake"]} />
    </div>
  );
}

export default function App() {
  return (
    <div className="relative flex h-[990px] w-[1850px] overflow-hidden bg-white font-['Roboto',sans-serif]">
      <Sidebar />
      <Main />
      <Annotations />
    </div>
  );
}
